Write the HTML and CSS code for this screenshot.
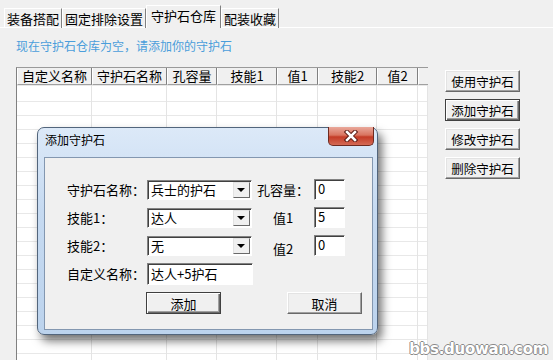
FILE: index.html
```html
<!DOCTYPE html>
<html lang="zh-CN">
<head>
  <meta charset="UTF-8" />
  <title>守护石仓库</title>
  <link rel="stylesheet" href="styles.css">
</head>
<body>
<div class="window">

  <!-- 页签 -->
  <div class="tabs">
    <div class="tab">装备搭配</div>
    <div class="tab">固定排除设置</div>
    <div class="tab active">守护石仓库</div>
    <div class="tab">配装收藏</div>
  </div>

  <p class="note">现在守护石仓库为空，请添加你的守护石</p>

  <div class="main">
    <!-- 守护石列表 -->
    <div class="grid">
      <div class="grid-head">
        <div class="col c-name">自定义名称</div>
        <div class="col c-stone">守护石名称</div>
        <div class="col c-slot">孔容量</div>
        <div class="col c-skill">技能1</div>
        <div class="col c-val">值1</div>
        <div class="col c-skill2">技能2</div>
        <div class="col c-val">值2</div>
        <div class="col c-fill"></div>
      </div>
      <div class="grid-body">
        <div class="col c-name"></div>
        <div class="col c-stone"></div>
        <div class="col c-slot"></div>
        <div class="col c-skill"></div>
        <div class="col c-val"></div>
        <div class="col c-skill2"></div>
        <div class="col c-val"></div>
        <div class="col c-fill"></div>
      </div>
    </div>

    <div class="side-buttons">
      <button class="btn">使用守护石</button>
      <button class="btn default">添加守护石</button>
      <button class="btn">修改守护石</button>
      <button class="btn">删除守护石</button>
    </div>
  </div>

  <!-- 添加守护石 对话框 -->
  <div class="dialog">
    <div class="dialog-title">
      添加守护石
      <div class="close">
        <svg width="16" height="12" viewBox="0 0 16 12">
          <path d="M4 2 L12 10 M12 2 L4 10" stroke="#5a1a12" stroke-width="4.5" stroke-linecap="square"/>
          <path d="M4 2 L12 10 M12 2 L4 10" stroke="#fff" stroke-width="2.5" stroke-linecap="square"/>
        </svg>
      </div>
    </div>
    <div class="dialog-client">
      <div class="form-row">
        <span class="label">守护石名称：</span>
        <div class="combo"><span>兵士的护石</span><i class="drop"></i></div>
        <span class="side-label">孔容量：</span>
        <div class="field small">0</div>
      </div>
      <div class="form-row">
        <span class="label">技能1：</span>
        <div class="combo"><span>达人</span><i class="drop"></i></div>
        <span class="side-label">值1</span>
        <div class="field small">5</div>
      </div>
      <div class="form-row">
        <span class="label">技能2：</span>
        <div class="combo"><span>无</span><i class="drop"></i></div>
        <span class="side-label low">值2</span>
        <div class="field small">0</div>
      </div>
      <div class="form-row">
        <span class="label">自定义名称：</span>
        <div class="field wide">达人+5护石</div>
      </div>
      <div class="dialog-buttons">
        <button class="btn default">添加</button>
        <button class="btn">取消</button>
      </div>
    </div>
  </div>

  <div class="watermark">bbs.duowan.com</div>
</div>
</body>
</html>
```

FILE: styles.css
```css
* {
  box-sizing: border-box;
}
body {
  margin: 0;
  background-color: #f0f0f0;
  font-family: "Noto Sans CJK SC", "Liberation Sans", sans-serif;
  font-size: 13px;
  color: #000;
}
.window {
  position: relative;
  width: 553px;
  height: 360px;
  overflow: hidden;
}

/* 页签 */
.tabs {
  display: flex;
  align-items: flex-end;
  height: 28px;
  padding-left: 4px;
  border-bottom: 1px solid #fff;
}
.tab {
  height: 20px;
  line-height: 19px;
  padding: 0 2px;
  border-left: 1px solid #fff;
  border-top: 1px solid #fff;
  border-right: 1px solid #808080;
  margin-bottom: -1px;
}
.tab.active {
  height: 23px;
  line-height: 20px;
  padding: 0 4px;
  background-color: #f0f0f0;
}

.note {
  margin: 9px 0 0;
  padding-left: 16px;
  height: 18px;
  line-height: 18px;
  font-size: 12px;
  color: #4a9edb;
}

.main {
  display: flex;
  align-items: flex-start;
  margin-top: 12px;
  padding-left: 16px;
}

/* 列表 */
.grid {
  width: 412px;
  height: 300px;
  border-left: 1px solid #808080;
  border-top: 1px solid #9a9a9a;
  display: flex;
  flex-direction: column;
}
.grid-head,
.grid-body {
  display: flex;
}
.grid-head {
  height: 17px;
  background-color: #f0f0f0;
}
.grid-head .col {
  line-height: 16px;
  text-align: center;
  border-left: 1px solid #fff;
  border-right: 1px solid #808080;
  border-bottom: 1px solid #a0a0a0;
}
.grid-head .c-fill {
  border-right: none;
}
.grid-body {
  flex: 1;
  background: #fff repeating-linear-gradient(to bottom, transparent 0 13px, #e8e8e8 13px 14px);
  background-position: 0 3px;
}
.grid-body .col {
  border-right: 1px solid #e4e4e4;
}
.c-name  { width: 75px; }
.c-stone { width: 75px; }
.c-slot  { width: 50px; }
.c-skill { width: 60px; }
.c-val   { width: 41px; }
.c-skill2 { width: 59px; }
.c-fill  { width: 10px; }

/* 按钮 */
.btn {
  height: 22px;
  padding: 0;
  font-family: inherit;
  font-size: 12.5px;
  color: #000;
  background-color: #f0f0f0;
  border: 1px solid;
  border-color: #fff #696969 #696969 #fff;
  box-shadow: inset -1px -1px 0 #a0a0a0, inset 1px 1px 0 #e3e3e3;
}
.btn.default {
  border-color: #404040;
  box-shadow: inset 1px 1px 0 #fff, inset -1px -1px 0 #696969, inset -2px -2px 0 #a0a0a0;
}
.side-buttons {
  display: flex;
  flex-direction: column;
  gap: 7px;
  margin: 3px 0 0 17px;
}
.side-buttons .btn {
  width: 75px;
}

/* 对话框 */
.dialog {
  position: absolute;
  left: 37px;
  top: 127px;
  width: 341px;
  height: 208px;
  display: flex;
  flex-direction: column;
  padding: 0 4px 4px 6px;
  border: 1px solid #52657c;
  border-radius: 7px;
  background: linear-gradient(to bottom, #dce9f8 0%, #c6daf1 40%, #bcd3ed 100%);
  box-shadow: 4px 6px 10px rgba(0, 0, 0, 0.55);
}
.dialog-title {
  position: relative;
  height: 29px;
  line-height: 24px;
  padding-left: 1px;
  font-size: 12px;
}
.close {
  position: absolute;
  top: -1px;
  right: -1px;
  width: 46px;
  height: 19px;
  display: flex;
  align-items: center;
  justify-content: center;
  border: 1px solid #6e2a20;
  border-top: none;
  border-radius: 0 0 5px 5px;
  background: linear-gradient(to bottom, #e9a89b 0%, #d9745f 45%, #c43b26 55%, #d46a55 100%);
}
.dialog-client {
  flex: 1;
  padding: 21px 0 0 22px;
  background-color: #f0f0f0;
  border: 1px solid #8397b0;
}
.form-row {
  display: flex;
  align-items: center;
  height: 21px;
  margin-bottom: 7px;
}
.label {
  width: 80px;
}
.side-label {
  width: 62px;
  text-align: center;
}
.side-label.low {
  padding-top: 6px;
}
.field,
.combo {
  height: 20px;
  line-height: 17px;
  padding-left: 3px;
  background-color: #fff;
  border: 1px solid;
  border-color: #828282 #fff #fff #828282;
  box-shadow: inset 1px 1px 0 #404040;
}
.combo {
  display: flex;
  align-items: center;
  justify-content: space-between;
  width: 105px;
  padding-right: 1px;
}
.combo span {
  line-height: 17px;
}
.drop {
  position: relative;
  width: 17px;
  height: 16px;
  background-color: #f0f0f0;
  border: 1px solid;
  border-color: #e3e3e3 #696969 #696969 #e3e3e3;
}
.drop::after {
  content: "";
  position: absolute;
  left: 3px;
  top: 5px;
  border-left: 4px solid transparent;
  border-right: 4px solid transparent;
  border-top: 4px solid #000;
}
.field.small {
  width: 31px;
  height: 21px;
}
.field.wide {
  width: 106px;
  height: 22px;
  line-height: 19px;
}
.dialog-buttons {
  display: flex;
  gap: 66px;
  margin-top: 8px;
  padding-left: 79px;
}
.dialog-buttons .btn {
  width: 75px;
  font-size: 13px;
}

.watermark {
  position: absolute;
  right: 5px;
  bottom: 2px;
  font-family: "DejaVu Sans", sans-serif;
  font-size: 15px;
  font-weight: bold;
  letter-spacing: -0.3px;
  color: #fff;
  text-shadow: 1px 0 #8a8a8a, -1px 0 #8a8a8a, 0 1px #8a8a8a, 0 -1px #8a8a8a;
}
```
